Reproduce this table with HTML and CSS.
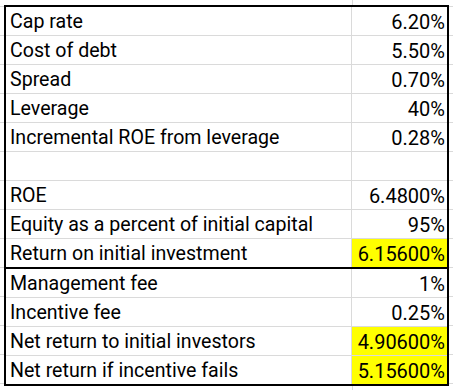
FILE: index.html
```html
<!DOCTYPE html>
<html>
<head>
<meta charset="utf-8">
<link rel="stylesheet" href="styles.css">
</head>
<body>
<div class="sheet">
  <div class="box">
    <div class="row"><div class="label">Cap rate</div><div class="val">6.20%</div></div>
    <div class="row"><div class="label">Cost of debt</div><div class="val">5.50%</div></div>
    <div class="row"><div class="label">Spread</div><div class="val">0.70%</div></div>
    <div class="row"><div class="label">Leverage</div><div class="val">40%</div></div>
    <div class="row"><div class="label">Incremental ROE from leverage</div><div class="val">0.28%</div></div>
    <div class="row"><div class="label"></div><div class="val"></div></div>
    <div class="row"><div class="label">ROE</div><div class="val">6.4800%</div></div>
    <div class="row"><div class="label">Equity as a percent of initial capital</div><div class="val">95%</div></div>
    <div class="row thick"><div class="label">Return on initial investment</div><div class="val hl">6.15600%</div></div>
    <div class="row"><div class="label">Management fee</div><div class="val">1%</div></div>
    <div class="row"><div class="label">Incentive fee</div><div class="val">0.25%</div></div>
    <div class="row"><div class="label">Net return to initial investors</div><div class="val hl">4.90600%</div></div>
    <div class="row last"><div class="label">Net return if incentive fails</div><div class="val hl">5.15600%</div></div>
  </div>
</div>
</body>
</html>
```
FILE: styles.css
```css
html, body {
  margin: 0;
  padding: 0;
}
body {
  width: 453px;
  height: 390px;
  overflow: hidden;
  background-color: #fff;
  background-image:
    linear-gradient(to right, transparent 352px, #dadada 352px, #dadada 353px, transparent 353px),
    repeating-linear-gradient(to bottom, transparent 0, transparent 6px, #dadada 6px, #dadada 7px, transparent 7px, transparent 29px);
  font-family: Roboto, "Noto Sans", sans-serif;
  font-size: 20px;
  color: #000;
}
.sheet {
  padding: 5px 0 0 4px;
}
.box {
  width: 441px;
  border: 2px solid #000;
  background: #fff;
}
.row {
  display: flex;
  height: 28px;
  border-bottom: 1px solid #dadada;
}
.row.thick {
  border-bottom: 2px solid #000;
}
.row.last {
  border-bottom: none;
}
.label {
  width: 346px;
  padding-left: 4px;
  box-sizing: border-box;
  font-size: 19.6px;
  line-height: 28px;
  padding-top: 1px;
  white-space: nowrap;
  border-right: 1px solid #dadada;
}
.val {
  flex: 1;
  text-align: right;
  padding-right: 2px;
  line-height: 28px;
  padding-top: 1px;
  white-space: nowrap;
}
.hl {
  background: #ffff00;
}
```
